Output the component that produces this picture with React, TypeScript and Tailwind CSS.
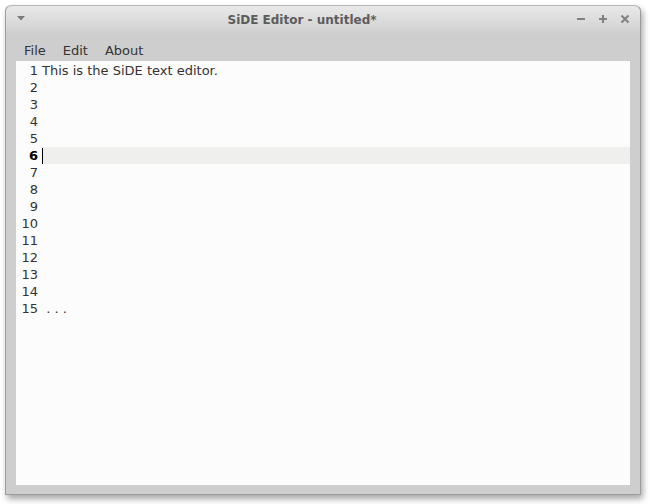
import React from "react";

const lines = [
  "This is the SiDE text editor.",
  "", "", "", "", "", "", "", "", "", "", "", "", "",
  " . . .",
];

export default function App() {
  return (
    <div className="w-[650px] h-[504px] bg-white overflow-hidden" style={{ fontFamily: '"DejaVu Sans", sans-serif' }}>
      <div className="ml-[5px] mt-[5px] w-[636px] h-[490px] flex flex-col rounded-t-[6px] border border-[#9c9c9c] border-t-[#b8b8b8] bg-[#cecece] shadow-[2px_4px_6px_rgba(0,0,0,0.35)]">
        <div className="relative h-[27px] shrink-0 rounded-t-[6px] bg-gradient-to-b from-[#e9e9e9] to-[#d0d0d0] flex items-center justify-center pr-[42px]">
          <svg className="absolute left-[11px] top-[10px]" width="8" height="5" viewBox="0 0 8 5">
            <polygon points="0,0 8,0 4,4.5" fill="#7a7a7a" />
          </svg>
          <span className="text-[12px] font-bold text-[#5c5c5c] leading-none">SiDE Editor - untitled*</span>
          <div className="absolute right-[10px] top-[8px] flex items-center gap-[12px]">
            <svg width="10" height="10" viewBox="0 0 10 10">
              <rect x="1" y="4" width="8" height="2" fill="#808080" />
            </svg>
            <svg width="10" height="10" viewBox="0 0 10 10">
              <rect x="1" y="4" width="8" height="2" fill="#808080" />
              <rect x="4" y="1" width="2" height="8" fill="#808080" />
            </svg>
            <svg width="10" height="10" viewBox="0 0 10 10">
              <path d="M1.5 1.5 L8.5 8.5 M8.5 1.5 L1.5 8.5" stroke="#808080" strokeWidth="2" />
            </svg>
          </div>
        </div>
        <div className="h-[28px] shrink-0 flex items-center pl-[18px] gap-[17px] text-[13px] text-[#333] pt-[8px]">
          <span>File</span>
          <span>Edit</span>
          <span>About</span>
        </div>
        <div className="flex-1 mx-[10px] mb-[9px] bg-[#fcfcfc] pt-[1px] text-[13px] text-[#333]">
          {lines.map((t, i) => {
            const n = i + 1;
            const cur = n === 6;
            return (
              <div key={n} className="flex h-[17px] items-center">
                <div className={"w-[22px] text-right shrink-0 " + (cur ? "font-bold text-black" : "")}>{n}</div>
                <div className={"ml-[4px] flex-1 h-full flex items-center whitespace-pre " + (cur ? "bg-[#efefed]" : "")}>
                  {cur ? <span className="w-[1px] h-[16px] bg-black" /> : t}
                </div>
              </div>
            );
          })}
        </div>
      </div>
    </div>
  );
}
